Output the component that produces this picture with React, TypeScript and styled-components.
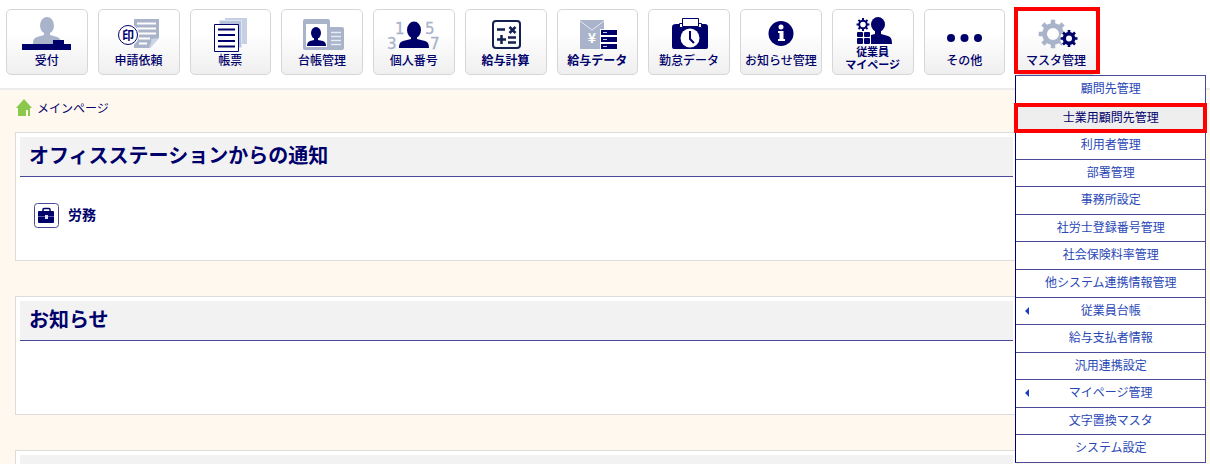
import React from "react";
import styled, { createGlobalStyle, css } from "styled-components";

const NAVY = "#00006b";
const GREY = "#a9b3c9";
const FONT = '"Noto Sans CJK JP", "Liberation Sans", sans-serif';

const GlobalStyle = createGlobalStyle`
  *, *::before, *::after { box-sizing: border-box; }
  html { min-height: 100%; background: #fff8ee; }
  body { margin: 0; font-family: ${FONT}; color: ${NAVY}; overflow-x: hidden; }
  body::-webkit-scrollbar, html::-webkit-scrollbar { display: none; }
`;

const Header = styled.header`
  background: #fff;
  border-bottom: 2px solid #ececec;
  padding: 9px 113px 13px 6px;
`;

const ToolList = styled.ul`
  display: grid;
  grid-template-columns: repeat(12, minmax(0, 1fr));
  gap: 10px;
  margin: 0;
  padding: 0;
  list-style: none;
`;

const ToolItem = styled.li`
  position: relative;
  min-width: 0;
`;

const ToolButton = styled.button<{ $heavy?: boolean }>`
  display: flex;
  flex-direction: column;
  align-items: center;
  width: 100%;
  height: 66px;
  padding: 5px 0 0;
  border: 1px solid #d6d6d6;
  border-radius: 5px;
  background: linear-gradient(#fff 35%, #efefef);
  color: ${NAVY};
  font-family: ${FONT};
  font-size: 12px;
  font-weight: ${(p) => (p.$heavy ? 700 : 500)};
  line-height: 16px;
  white-space: nowrap;
`;

const ToolIcon = styled.svg<{ $short?: boolean }>`
  display: block;
  flex: none;
  width: 60px;
  height: ${(p) => (p.$short ? 30 : 37)}px;
  font-family: "DejaVu Sans", ${FONT};
`;

const ToolLabel = styled.span<{ $stacked?: boolean }>`
  display: flex;
  flex-direction: column;
  align-items: center;
  line-height: ${(p) => (p.$stacked ? 13 : 16)}px;
  font-size: ${(p) => (p.$stacked ? 11 : 12)}px;
  font-weight: ${(p) => (p.$stacked ? 700 : "inherit")};
`;

const ActiveFrame = styled.span`
  position: absolute;
  inset: -2px -3px 1px -1px;
  border: 4px solid #f00;
  pointer-events: none;
`;

const Menu = styled.ul`
  position: absolute;
  z-index: 2;
  top: 100%;
  left: 0;
  display: grid;
  grid-auto-rows: 1fr;
  width: 191px;
  height: 388px;
  margin: 0;
  padding: 0;
  list-style: none;
  background: #fff;
  border: 1px solid #4a4a9a;
  border-left-color: ${NAVY};
`;

const MenuItem = styled.li`
  position: relative;
  & + & { border-top: 1px solid #4a4a9a; }
`;

const MenuLink = styled.a<{ $selected?: boolean; $submenu?: boolean }>`
  display: block;
  height: 100%;
  line-height: 24px;
  font-size: 12px;
  text-align: center;
  text-decoration: none;
  color: #2947b5;
  ${(p) => p.$selected && css`
    background: #eee;
    color: ${NAVY};
    &::after {
      content: "";
      position: absolute;
      z-index: 1;
      inset: -2px -2px;
      border: 4px solid #f00;
    }
  `}
  ${(p) => p.$submenu && css`
    &::before {
      content: "";
      position: absolute;
      left: 9px;
      top: 9px;
      border: solid transparent;
      border-width: 4px 4px 4px 0;
      border-right-color: #1c3fc4;
    }
  `}
`;

const Main = styled.main`
  padding: 6px 192px 0 15px;
`;

const Breadcrumb = styled.nav`
  display: flex;
  align-items: center;
  gap: 4px;
  height: 24px;
  margin-bottom: 12px;
`;

const CrumbLink = styled.a`
  font-size: 12px;
  line-height: 24px;
  color: ${NAVY};
  text-decoration: none;
`;

const Panel = styled.section<{ $minHeight: number }>`
  margin-bottom: 35px;
  padding: 4px;
  min-height: ${(p) => p.$minHeight}px;
  background: #fff;
  border: 1px solid #dcdcdc;
`;

const PanelTitle = styled.h2`
  margin: 0;
  padding: 0 9px;
  height: 40px;
  line-height: 36px;
  font-size: 20px;
  font-weight: 700;
  background: #f2f2f2;
  border-bottom: 1px solid #4a4a98;
`;

const Notice = styled.a`
  display: flex;
  align-items: flex-start;
  gap: 9px;
  margin: 26px 14px;
  color: ${NAVY};
  font-size: 14px;
  font-weight: 700;
  line-height: 22px;
  text-decoration: none;
`;

function gearPath(cx: number, cy: number, outer: number, inner: number, hole: number, teeth = 8) {
  const points: string[] = [];
  const step = (Math.PI * 2) / teeth;
  for (let i = 0; i < teeth; i++) {
    const a = i * step - Math.PI / 2;
    const corners: [number, number][] = [
      [-0.25, inner], [-0.2, outer], [0.2, outer], [0.25, inner],
    ];
    corners.forEach(([k, r]) => {
      points.push(`${(cx + r * Math.cos(a + k * step)).toFixed(2)} ${(cy + r * Math.sin(a + k * step)).toFixed(2)}`);
    });
  }
  return `M${points.join("L")}Z M${cx - hole} ${cy}a${hole} ${hole} 0 1 0 ${hole * 2} 0a${hole} ${hole} 0 1 0 ${-hole * 2} 0Z`;
}

const ReceptionIcon = () => (
  <g>
    <ellipse cx="30" cy="10.500" rx="7" ry="8.500" fill={GREY} />
    <path d="M27 17h6v3l7 2c3 1 4 3 4 8H16c0-5 1-7 4-8l7-2z" fill={GREY} />
    <path d="M5 29h31v-4h11v4h7v6H5z" fill={NAVY} />
  </g>
);

const RequestIcon = () => (
  <g>
    <path d="M25 4h25v19l-9 10H25z" fill={GREY} />
    <path d="M28 8.500h19M28 13.500h19M30 18.500h17M30 23.500h11M30 28.500h8" stroke="#fff" strokeWidth="2" />
    <path d="M50 23L41 33l-1-1c2-3 3-6 2-8z" fill="#cdd6e8" />
    <circle cx="19" cy="20" r="11" fill="#fff" />
    <circle cx="19" cy="20" r="9.500" fill="#fff" stroke={NAVY} strokeWidth="1" />
    <text x="19" y="24.500" textAnchor="middle" fontSize="12" fontWeight="700" fontFamily={FONT} fill={NAVY}>印</text>
  </g>
);

const FormsIcon = () => (
  <g>
    <path d="M25 3h22v26H25z" fill="#c6d0e4" />
    <path d="M19.500 5.500h22v27h-22z" fill="#b5c2dc" stroke="#dfe5f0" />
    <path d="M14.500 9.500h24v27h-24z" fill="#fff" stroke={NAVY} />
    <path d="M18 14.500h17M18 20h17M18 26h17M18 31.500h17" stroke={NAVY} strokeWidth="2" />
  </g>
);

const LedgerIcon = () => (
  <g>
    <path d="M13 4h23q2 0 2 2v6h12q2 0 2 2v19q0 2-2 2H13q-2 0-2-2V6q0-2 2-2z" fill={GREY} />
    <path d="M14 9h21v23H14z" fill="#fff" />
    <path d="M39 17.500h10M39 21.500h10M39 25.500h10M39 29.500h10" stroke="#e7ebf3" strokeWidth="1.500" />
    <ellipse cx="24" cy="18" rx="5" ry="6" fill={NAVY} />
    <path d="M22 22h4v3l5 1c2 1 3 2 3 5H15c0-3 1-4 3-5l4-1z" fill={NAVY} />
  </g>
);

const NumberIcon = () => (
  <g>
    <g fontSize="15" fill={GREY} stroke={GREY} strokeWidth="0.300">
      <text x="11" y="19">1</text>
      <text x="3" y="34">3</text>
      <text x="41" y="19">5</text>
      <text x="46" y="34">7</text>
    </g>
    <ellipse cx="30" cy="15" rx="7" ry="8.500" fill={NAVY} />
    <path d="M27 21h6v3l8 2c3 1 4 3 4 7H15c0-4 1-6 4-7l8-2z" fill={NAVY} />
  </g>
);

const CalcIcon = () => (
  <g fill="none" stroke="#14204f" strokeWidth="2">
    <rect x="17" y="6" width="27" height="27" rx="3" />
    <path d="M21 14.500h8M33.500 12l6 6M39.500 12l-6 6M21 24.500h9M25.500 20v9M32 22.500h8M32 27.500h8" strokeWidth="2.500" />
  </g>
);

const PayDataIcon = () => (
  <g>
    <path d="M13 5h24v29H13z" fill={GREY} />
    <path d="M13 6l12 9L37 6" fill="none" stroke="#e4e8f0" />
    <text x="25" y="28" textAnchor="middle" fontSize="14" fontWeight="700" fill="#fff" fontFamily={FONT}>¥</text>
    <path d="M33 14h17v20H33z" fill="#fff" />
    <path d="M34 15h16v5H34zM34 22h16v5H34zM34 29h16v5H34z" fill={NAVY} />
    <path d="M36 17.500h4M36 24.500h4M36 31.500h4" stroke="#c4cae0" />
  </g>
);

const AttendanceIcon = () => (
  <g>
    <path d="M17 9h29q3 0 3 3v20q0 2-2 2H15q-2 0-2-2V12q0-3 4-3z" fill={NAVY} />
    <path d="M20.500 8.500h22v4h-22z" fill="#fff" stroke={NAVY} />
    <path d="M23.500 3.500h16v8h-16z" fill="#fff" stroke={NAVY} />
    <circle cx="31" cy="23" r="9.500" fill="#fff" />
    <path d="M31 16v8l4 4" fill="none" stroke={NAVY} strokeWidth="2" />
  </g>
);

const InfoIcon = () => (
  <g>
    <circle cx="30" cy="18.500" r="12.500" fill={NAVY} />
    <circle cx="30" cy="12" r="2.500" fill="#fff" />
    <path d="M27 16h5.500v8H34v2h-7v-2h1.500v-6H27z" fill="#fff" />
  </g>
);

const MyPageIcon = () => (
  <g fill={NAVY}>
    <path d={gearPath(20, 9.5, 6.5, 4.8, 2.8)} fillRule="evenodd" />
    <rect x="14" y="17" width="6" height="5" rx="1" />
    <rect x="21" y="17" width="6" height="5" rx="1" />
    <rect x="14" y="23" width="6" height="6" rx="1" />
    <rect x="21" y="23" width="6" height="6" rx="1" />
    <ellipse cx="35" cy="9.500" rx="7" ry="7.500" />
    <path d="M32 15h6v4l7 2c3 1 4 3 4 8H28V20l4-1z" />
  </g>
);

const MoreIcon = () => (
  <g fill={NAVY}>
    <circle cx="17" cy="23" r="4" />
    <circle cx="30.500" cy="23" r="4" />
    <circle cx="44" cy="23" r="4" />
  </g>
);

const MasterIcon = () => (
  <g fillRule="evenodd">
    <path d={gearPath(27, 19, 14.5, 11, 6)} fill={GREY} />
    <circle cx="43" cy="23.500" r="9" fill="#fafafa" />
    <path d={gearPath(43, 23.5, 8.6, 6.5, 3)} fill={NAVY} />
  </g>
);

type Tool = { lines: string[]; Icon: () => React.JSX.Element; heavy?: boolean };

const tools: Tool[] = [
  { lines: ["受付"], Icon: ReceptionIcon },
  { lines: ["申請依頼"], Icon: RequestIcon },
  { lines: ["帳票"], Icon: FormsIcon },
  { lines: ["台帳管理"], Icon: LedgerIcon },
  { lines: ["個人番号"], Icon: NumberIcon },
  { lines: ["給与計算"], Icon: CalcIcon, heavy: true },
  { lines: ["給与データ"], Icon: PayDataIcon, heavy: true },
  { lines: ["勤怠データ"], Icon: AttendanceIcon },
  { lines: ["お知らせ管理"], Icon: InfoIcon },
  { lines: ["従業員", "マイページ"], Icon: MyPageIcon },
  { lines: ["その他"], Icon: MoreIcon },
  { lines: ["マスタ管理"], Icon: MasterIcon },
];

const menuEntries: { label: string; selected?: boolean; submenu?: boolean }[] = [
  { label: "顧問先管理" },
  { label: "士業用顧問先管理", selected: true },
  { label: "利用者管理" },
  { label: "部署管理" },
  { label: "事務所設定" },
  { label: "社労士登録番号管理" },
  { label: "社会保険料率管理" },
  { label: "他システム連携情報管理" },
  { label: "従業員台帳", submenu: true },
  { label: "給与支払者情報" },
  { label: "汎用連携設定" },
  { label: "マイページ管理", submenu: true },
  { label: "文字置換マスタ" },
  { label: "システム設定" },
];

export default function App() {
  return (
    <>
      <GlobalStyle />
      <Header>
        <ToolList>
          {tools.map(({ lines, Icon, heavy }) => {
            const open = lines[0] === "マスタ管理";
            const stacked = lines.length > 1;
            return (
              <ToolItem key={lines[0]}>
                <ToolButton type="button" $heavy={heavy} aria-expanded={open || undefined}>
                  <ToolIcon $short={stacked} viewBox={stacked ? "0 0 60 30" : "0 0 60 37"} aria-hidden="true">
                    <Icon />
                  </ToolIcon>
                  <ToolLabel $stacked={stacked}>
                    {lines.map((line) => <span key={line}>{line}</span>)}
                  </ToolLabel>
                </ToolButton>
                {open && <ActiveFrame />}
                {open && (
                  <Menu>
                    {menuEntries.map((entry) => (
                      <MenuItem key={entry.label}>
                        <MenuLink href="#" $selected={entry.selected} $submenu={entry.submenu}>
                          {entry.label}
                        </MenuLink>
                      </MenuItem>
                    ))}
                  </Menu>
                )}
              </ToolItem>
            );
          })}
        </ToolList>
      </Header>
      <Main>
        <Breadcrumb>
          <svg width="18" height="18" viewBox="0 0 18 18" aria-hidden="true">
            <path d="M9 0l8 9h-2v8h-2v-6h-2v6H3V9H1z" fill="#8cc84b" />
          </svg>
          <CrumbLink href="#">メインページ</CrumbLink>
        </Breadcrumb>
        <Panel $minHeight={129}>
          <PanelTitle>オフィスステーションからの通知</PanelTitle>
          <Notice href="#">
            <svg width="25" height="25" viewBox="0 0 25 25" aria-hidden="true">
              <rect x="0.500" y="0.500" width="24" height="24" rx="3" fill="#fff" stroke="#4a4a98" />
              <path d="M9 8V6.500q0-1 1-1h5q1 0 1 1V8" fill="none" stroke={NAVY} strokeWidth="1.500" />
              <rect x="4" y="8" width="16" height="12" rx="1" fill={NAVY} />
              <path d="M4 13.500h16" stroke="#5a5aa6" />
              <rect x="11" y="12" width="3" height="4" fill="#dfe2f2" />
            </svg>
            労務
          </Notice>
        </Panel>
        <Panel $minHeight={119}>
          <PanelTitle>お知らせ</PanelTitle>
        </Panel>
        <Panel $minHeight={119}>
          <PanelTitle />
        </Panel>
      </Main>
    </>
  );
}
